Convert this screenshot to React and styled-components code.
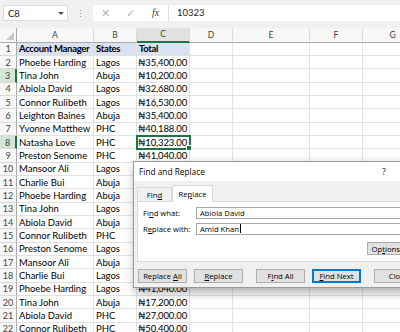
import React from 'react';
import styled, { createGlobalStyle, css } from 'styled-components';

const CELL_FONT = `Lato, "Noto Sans", "DejaVu Sans", sans-serif`;
const UI_FONT = `"Open Sans", "Noto Sans", sans-serif`;

const Global = createGlobalStyle`
  html, body { margin: 0; padding: 0; background: #fff; overflow: hidden; }
  #root { width: 400px; height: 332px; }
`;

const Screen = styled.div`
  position: relative;
  width: 400px;
  height: 332px;
  overflow: hidden;
  background: #fff;
  font-family: ${CELL_FONT};
`;

/* ---------- formula bar ---------- */
const FormulaBar = styled.div`
  height: 28px;
  box-sizing: border-box;
  background: #f0f0f0;
  display: flex;
  align-items: flex-start;
  padding: 5px 0 0 3px;
`;

const NameBox = styled.div`
  width: 65px;
  height: 16px;
  box-sizing: border-box;
  background: #fff;
  border: 1px solid #dcdcdc;
  display: flex;
  align-items: center;
  justify-content: space-between;
  padding: 0 3px 0 4px;
  font-size: 9.5px;
  color: #222;
`;

const Caret = styled.span`
  width: 0;
  height: 0;
  border-left: 3px solid transparent;
  border-right: 3px solid transparent;
  border-top: 3px solid #555;
`;

const Grip = styled.div`
  width: 25px;
  height: 16px;
  display: flex;
  flex-direction: column;
  align-items: center;
  justify-content: center;
  gap: 2px;
`;

const GripDot = styled.span`
  width: 1px;
  height: 1px;
  background: #9a9a9a;
`;

const IconBox = styled.div`
  width: 75px;
  height: 16px;
  background: #fff;
  display: flex;
  align-items: center;
`;

const BarIcon = styled.span`
  width: 25px;
  text-align: center;
  font-size: ${(p) => p.$size || 10}px;
  color: ${(p) => (p.$active ? '#444' : '#b4b4b4')};
  font-family: ${(p) => (p.$serif ? '"Liberation Serif", serif' : UI_FONT)};
  font-style: ${(p) => (p.$serif ? 'italic' : 'normal')};
  line-height: 16px;
`;

const FormulaInput = styled.div`
  flex: 1;
  height: 16px;
  box-sizing: border-box;
  background: #fff;
  border-left: 1px solid #dcdcdc;
  padding-left: 8px;
  font-size: 9.5px;
  line-height: 16px;
  color: #222;
`;

/* ---------- sheet ---------- */
const Sheet = styled.div`
  display: grid;
  grid-template-columns: 17px 77px 43px 53px 43px 77px 53px 60px;
  grid-template-rows: 14.67px;
  grid-auto-rows: 13.33px;
`;

const Corner = styled.div`
  position: relative;
  background: #f7f7f7;
  border-right: 1px solid #ababab;
  border-bottom: 1px solid #ababab;
  box-sizing: border-box;
  &::after {
    content: '';
    position: absolute;
    right: 2px;
    bottom: 2px;
    width: 0;
    height: 0;
    border-left: 8px solid transparent;
    border-bottom: 8px solid #c8c8c8;
  }
`;

const ColHead = styled.div`
  box-sizing: border-box;
  display: flex;
  align-items: center;
  justify-content: center;
  font-size: 8.5px;
  color: #444;
  background: ${(p) => (p.$sel ? '#e1e1e1' : '#f7f7f7')};
  border-right: 1px solid #dadada;
  border-bottom: ${(p) => (p.$sel ? '2px solid #217346' : '1px solid #ababab')};
`;

const RowHead = styled.div`
  box-sizing: border-box;
  display: flex;
  align-items: center;
  justify-content: center;
  font-size: 9px;
  color: #444;
  background: ${(p) => (p.$sel ? '#d3e5d7' : '#f7f7f7')};
  border-right: ${(p) => (p.$sel ? '2px solid #217346' : '1px solid #ababab')};
  border-bottom: 1px solid #dadada;
`;

const Cell = styled.div`
  position: relative;
  box-sizing: border-box;
  display: flex;
  align-items: center;
  justify-content: ${(p) => (p.$right ? 'flex-end' : 'flex-start')};
  padding: 0 2px;
  font-size: 9.5px;
  color: #000;
  white-space: nowrap;
  overflow: visible;
  font-weight: ${(p) => (p.$bold ? 700 : 400)};
  letter-spacing: ${(p) => (p.$bold ? '-0.3px' : p.$right ? '-0.15px' : '0')};
  background: ${(p) => (p.$fill ? '#d9e1f2' : '#fff')};
  border-right: 1px solid #e1e1e1;
  border-bottom: 1px solid #e1e1e1;
  ${(p) =>
    p.$active &&
    css`
      outline: 2px solid #217346;
      outline-offset: -1px;
      z-index: 2;
      &::after {
        content: '';
        position: absolute;
        right: -3px;
        bottom: -3px;
        width: 4px;
        height: 4px;
        background: #217346;
        border: 1px solid #fff;
      }
    `}
`;

/* ---------- dialog ---------- */
const Dialog = styled.div`
  position: absolute;
  left: 133px;
  top: 161px;
  width: 310px;
  height: 127px;
  box-sizing: border-box;
  border: 1px solid #9a9a9a;
  background: #f0f0f0;
  box-shadow: 2px 4px 10px rgba(0, 0, 0, 0.35);
  display: flex;
  flex-direction: column;
  font-family: ${UI_FONT};
  font-size: 7.7px;
  color: #000;
  z-index: 10;
`;

const TitleBar = styled.div`
  height: 19px;
  flex-shrink: 0;
  background: #fff;
  display: flex;
  align-items: center;
  padding-left: 5px;
`;

const Title = styled.div`
  flex: 1;
  font-size: 8.3px;
`;

const TitleButton = styled.div`
  width: ${(p) => p.$w}px;
  text-align: center;
  font-size: 9px;
  color: #222;
`;

const Body = styled.div`
  padding: 0 3px;
  display: flex;
  flex-direction: column;
`;

const TabStrip = styled.div`
  height: 20px;
  display: flex;
  align-items: flex-end;
  position: relative;
  z-index: 1;
`;

const Tab = styled.div`
  box-sizing: border-box;
  width: ${(p) => p.$w}px;
  height: ${(p) => (p.$active ? 17 : 14)}px;
  display: flex;
  align-items: center;
  justify-content: center;
  background: ${(p) => (p.$active ? '#fff' : '#f0f0f0')};
  border: 1px solid #d9d9d9;
  border-bottom: none;
  margin-bottom: ${(p) => (p.$active ? -1 : 0)}px;
`;

const Panel = styled.div`
  height: 61px;
  box-sizing: border-box;
  background: #fff;
  border: 1px solid #d9d9d9;
  padding: 5px 0 0 5px;
`;

const Fields = styled.div`
  display: grid;
  grid-template-columns: 53px 220px;
  grid-auto-rows: 12px;
  row-gap: 3.5px;
  align-items: center;
`;

const Label = styled.div`
  white-space: nowrap;
`;

const Input = styled.div`
  height: 12px;
  box-sizing: border-box;
  border: 1px solid #a8a8a8;
  background: #fff;
  display: flex;
  align-items: center;
  padding-left: 3px;
  white-space: nowrap;
`;

const TextCaret = styled.span`
  display: inline-block;
  width: 1px;
  height: 9px;
  background: #000;
  margin-left: 1px;
`;

const OptionsRow = styled.div`
  display: flex;
  padding-left: 223.7px;
  margin-top: 7.4px;
`;

const Button = styled.div`
  box-sizing: border-box;
  width: 49px;
  height: ${(p) => p.$h || 14}px;
  flex-shrink: 0;
  margin-left: ${(p) => p.$ml || 0}px;
  display: flex;
  align-items: center;
  justify-content: center;
  background: #e1e1e1;
  border: 1px solid ${(p) => (p.$focus ? '#0078d7' : '#adadad')};
  box-shadow: ${(p) => (p.$focus ? 'inset 0 0 0 1px #0078d7' : 'none')};
  white-space: nowrap;
`;

const ButtonRow = styled.div`
  display: flex;
  margin-top: 7px;
  padding-left: 1px;
`;

const U = styled.span`
  text-decoration: underline;
  text-underline-offset: 1px;
`;

const rows = [
  ['Phoebe Harding', 'Lagos', '₦35,400.00'],
  ['Tina John', 'Abuja', '₦10,200.00'],
  ['Abiola David', 'Lagos', '₦32,680.00'],
  ['Connor Rulibeth', 'Lagos', '₦16,530.00'],
  ['Leighton Baines', 'Abuja', '₦35,400.00'],
  ['Yvonne Matthew', 'PHC', '₦40,188.00'],
  ['Natasha Love', 'PHC', '₦10,323.00'],
  ['Preston Senome', 'PHC', '₦41,040.00'],
  ['Mansoor Ali', 'Lagos', '₦22,400.00'],
  ['Charlie Bui', 'Abuja', '₦18,300.00'],
  ['Phoebe Harding', 'Abuja', '₦35,400.00'],
  ['Tina John', 'Lagos', '₦10,200.00'],
  ['Abiola David', 'Abuja', '₦32,680.00'],
  ['Connor Rulibeth', 'PHC', '₦16,530.00'],
  ['Preston Senome', 'Lagos', '₦35,400.00'],
  ['Mansoor Ali', 'Abuja', '₦40,188.00'],
  ['Charlie Bui', 'Lagos', '₦10,323.00'],
  ['Phoebe Harding', 'Lagos', '₦41,040.00'],
  ['Tina John', 'Abuja', '₦17,200.00'],
  ['Abiola David', 'PHC', '₦27,000.00'],
  ['Connor Rulibeth', 'PHC', '₦50,400.00'],
];

const cols = ['A', 'B', 'C', 'D', 'E', 'F', 'G'];
const emptyCols = 4; // D, E, F, G

export default function App() {
  return (
    <Screen>
      <Global />
      <FormulaBar>
        <NameBox>
          <span>C8</span>
          <Caret />
        </NameBox>
        <Grip>
          <GripDot />
          <GripDot />
          <GripDot />
        </Grip>
        <IconBox>
          <BarIcon $size={11}>✕</BarIcon>
          <BarIcon $size={11}>✓</BarIcon>
          <BarIcon $active $serif $size={10}>
            fx
          </BarIcon>
        </IconBox>
        <FormulaInput>10323</FormulaInput>
      </FormulaBar>

      <Sheet>
        <Corner />
        {cols.map((c) => (
          <ColHead key={c} $sel={c === 'C'}>
            {c}
          </ColHead>
        ))}

        <RowHead>1</RowHead>
        <Cell $bold $fill>Account Manager</Cell>
        <Cell $bold $fill>States</Cell>
        <Cell $bold $fill>Total</Cell>
        {Array.from({ length: emptyCols }).map((_, i) => (
          <Cell key={i} />
        ))}

        {rows.map((r, i) => {
          const n = i + 2;
          return (
            <React.Fragment key={n}>
              <RowHead $sel={n === 8 || n === 3}>{n}</RowHead>
              <Cell>{r[0]}</Cell>
              <Cell>{r[1]}</Cell>
              <Cell $right $active={n === 8}>
                {r[2]}
              </Cell>
              {Array.from({ length: emptyCols }).map((_, j) => (
                <Cell key={j} />
              ))}
            </React.Fragment>
          );
        })}
      </Sheet>

      <Dialog>
        <TitleBar>
          <Title>Find and Replace</Title>
          <TitleButton $w={24}>?</TitleButton>
          <TitleButton $w={46}>✕</TitleButton>
        </TitleBar>
        <Body>
          <TabStrip>
            <Tab $w={35}>
              <span>
                Fin<U>d</U>
              </span>
            </Tab>
            <Tab $w={41} $active>
              <span>
                Re<U>p</U>lace
              </span>
            </Tab>
          </TabStrip>
          <Panel>
            <Fields>
              <Label>
                Fi<U>n</U>d what:
              </Label>
              <Input>
                <span>Abiola David</span>
              </Input>
              <Label>
                R<U>e</U>place with:
              </Label>
              <Input>
                <span>Amid Khan</span>
                <TextCaret />
              </Input>
            </Fields>
            <OptionsRow>
              <Button $h={13.3}>
                <span>
                  Op<U>t</U>ions &gt;&gt;
                </span>
              </Button>
            </OptionsRow>
          </Panel>
          <ButtonRow>
            <Button>
              <span>
                Replace <U>A</U>ll
              </span>
            </Button>
            <Button $ml={7}>
              <span>
                <U>R</U>eplace
              </span>
            </Button>
            <Button $ml={13}>
              <span>
                F<U>i</U>nd All
              </span>
            </Button>
            <Button $ml={7} $focus>
              <span>
                <U>F</U>ind Next
              </span>
            </Button>
            <Button $ml={13}>
              <span>Close</span>
            </Button>
          </ButtonRow>
        </Body>
      </Dialog>
    </Screen>
  );
}
